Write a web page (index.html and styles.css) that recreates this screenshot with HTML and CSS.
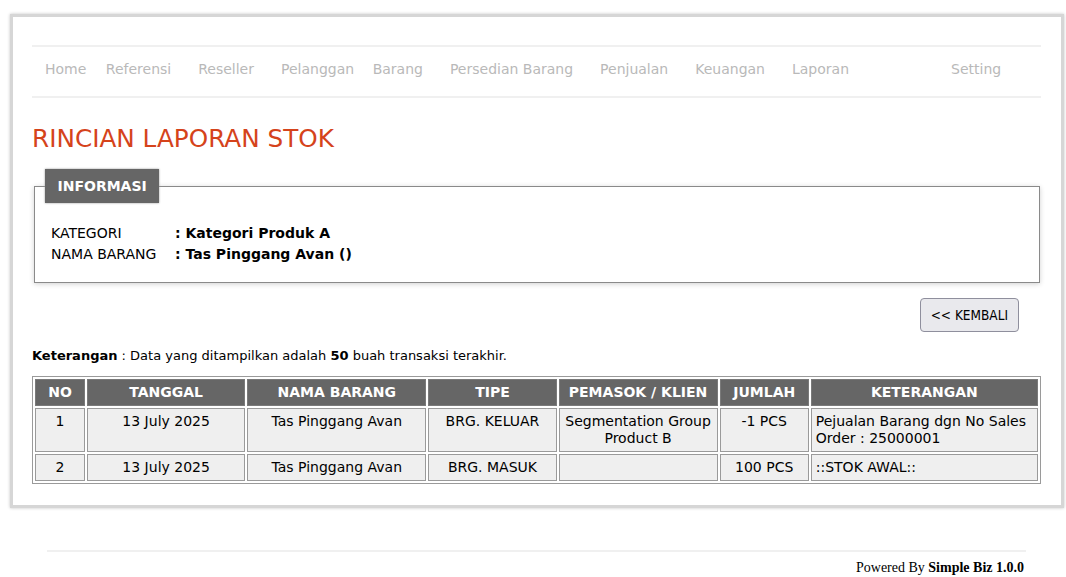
FILE: index.html
```html
<!DOCTYPE html>
<html>
<head>
<meta charset="utf-8">
<link rel="stylesheet" href="styles.css">
</head>
<body>
<div class="wrap">
  <nav class="nav">
    <a class="nav-item nav-first">Home</a>
    <a class="nav-item">Referensi</a>
    <a class="nav-item">Reseller</a>
    <a class="nav-item nav-tight">Pelanggan</a>
    <a class="nav-item">Barang</a>
    <a class="nav-item">Persedian Barang</a>
    <a class="nav-item">Penjualan</a>
    <a class="nav-item">Keuangan</a>
    <a class="nav-item">Laporan</a>
    <a class="nav-item nav-setting">Setting</a>
  </nav>

  <h1 class="title">RINCIAN LAPORAN STOK</h1>

  <fieldset class="info">
    <legend class="info-legend">INFORMASI</legend>
    <div class="info-row"><span class="info-label">KATEGORI</span><span class="info-value">: Kategori Produk A</span></div>
    <div class="info-row"><span class="info-label">NAMA BARANG</span><span class="info-value">: Tas Pinggang Avan ()</span></div>
  </fieldset>

  <div class="actions">
    <button class="btn">&lt;&lt; KEMBALI</button>
  </div>

  <p class="note"><b>Keterangan</b> : Data yang ditampilkan adalah <b>50</b> buah transaksi terakhir.</p>

  <table class="grid">
    <thead>
      <tr>
        <th class="c-no">NO</th>
        <th class="c-tgl">TANGGAL</th>
        <th class="c-nama">NAMA BARANG</th>
        <th class="c-tipe">TIPE</th>
        <th class="c-pem">PEMASOK / KLIEN</th>
        <th class="c-jml">JUMLAH</th>
        <th class="c-ket">KETERANGAN</th>
      </tr>
    </thead>
    <tbody>
      <tr>
        <td class="center">1</td>
        <td class="center">13 July 2025</td>
        <td class="center">Tas Pinggang Avan</td>
        <td class="center">BRG. KELUAR</td>
        <td class="center">Segmentation Group Product B</td>
        <td class="center">-1 PCS</td>
        <td>Pejualan Barang dgn No Sales Order : 25000001</td>
      </tr>
      <tr>
        <td class="center">2</td>
        <td class="center">13 July 2025</td>
        <td class="center">Tas Pinggang Avan</td>
        <td class="center">BRG. MASUK</td>
        <td class="center"></td>
        <td class="center">100 PCS</td>
        <td>::STOK AWAL::</td>
      </tr>
    </tbody>
  </table>
</div>

<footer class="footer">
  <div class="footer-text">Powered By <b>Simple Biz 1.0.0</b></div>
</footer>
</body>
</html>
```

FILE: styles.css
```css
* { box-sizing: border-box; }

body {
  margin: 0;
  background: #fff;
  font-family: "DejaVu Sans", Verdana, sans-serif;
  color: #000;
}

.wrap {
  margin: 14px 0 0 10px;
  width: 1054px;
  border: 3px solid #d6d6d6;
  box-shadow: 0 0 3px #c4c4c4;
  padding: 28px 20px 21px 19px;
}

.nav {
  display: flex;
  align-items: center;
  height: 53px;
  border-top: 2px solid #f0f0f0;
  border-bottom: 2px solid #f0f0f0;
  padding-bottom: 5px;
}

.nav-item {
  font-size: 14px;
  color: #b9b9b9;
  padding: 0 13.5px;
  white-space: nowrap;
}

.nav-first { padding-left: 13px; padding-right: 6px; }
.nav-tight { padding-right: 5px; }
.nav-setting { margin-left: 75px; }

.title {
  margin: 26px 0 0 0;
  font-size: 24.7px;
  font-weight: normal;
  color: #d5431b;
  line-height: 30px;
}

.info {
  margin: 15px 1px 0 2px;
  border: 1px solid #8a8a8a;
  box-shadow: 0 1px 5px #d0d0d0;
  padding: 20px 16px 17px 16px;
}

.info-legend {
  margin-left: -6px;
  background: #666;
  color: #fff;
  font-weight: bold;
  font-size: 14px;
  padding: 0 12.5px;
  height: 34px;
  line-height: 34px;
  box-shadow: 0 0 2px #999;
}

.info-row {
  display: flex;
  font-size: 14px;
  line-height: 21px;
}

.info-label { width: 124px; }
.info-value { font-weight: bold; }

.actions {
  display: flex;
  justify-content: flex-end;
  margin-top: 15px;
  padding-right: 22px;
}

.btn {
  font-family: "DejaVu Sans Condensed", Tahoma, sans-serif;
  font-size: 13.5px;
  height: 34px;
  padding: 0 10px;
  background: #e9e9ed;
  border: 1px solid #8f8f9d;
  border-radius: 4px;
  color: #000;
}

.note {
  margin: 15px 0 12px 0;
  font-size: 13px;
  line-height: 17px;
}

.grid {
  width: 1009px;
  border: 1px solid #9a9a9a;
  border-spacing: 2px;
  font-size: 14px;
  line-height: 17px;
}

.grid th {
  background: #666;
  color: #fff;
  font-weight: bold;
  border: 1px solid #7a7a7a;
  padding: 4px 3px;
  white-space: nowrap;
}

.grid td {
  background: #efefef;
  border: 1px solid #9a9a9a;
  padding: 4px;
  vertical-align: top;
}

.grid td.center { text-align: center; }

.c-no { width: 50px; }
.c-tgl { width: 158px; }
.c-nama { width: 179px; }
.c-tipe { width: 128px; }
.c-pem { width: 159px; }
.c-jml { width: 89px; }
.c-ket { width: 227px; }

.footer {
  margin: 42px 0 0 47px;
  width: 979px;
  border-top: 2px solid #f0f0f0;
}

.footer-text {
  text-align: right;
  padding: 7px 2px 0 0;
  font-family: "Liberation Serif", "Times New Roman", serif;
  font-size: 14px;
  line-height: 17px;
}
```
